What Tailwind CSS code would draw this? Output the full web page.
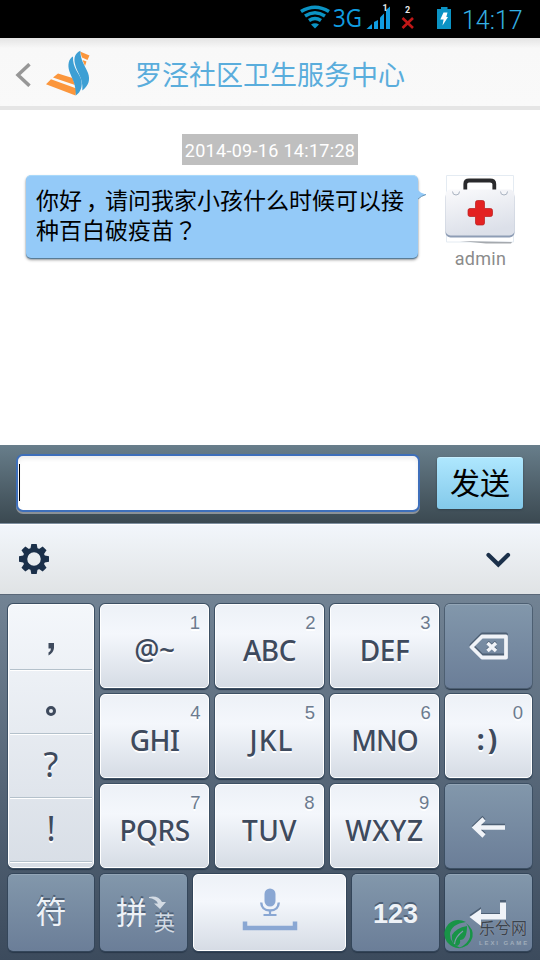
<!DOCTYPE html>
<html lang="zh-CN">
<head>
<meta charset="utf-8">
<title>罗泾社区卫生服务中心</title>
<script src="https://cdn.jsdelivr.net/npm/@tailwindcss/browser@4"></script>
</head>
<body class="w-[540px] h-[960px] overflow-hidden bg-white flex flex-col font-['Roboto','Noto_Sans_CJK_SC',sans-serif]">

<!-- status bar -->
<div class="h-[38px] shrink-0 bg-black flex items-start pl-[300px]">
  <svg class="w-[160px] h-[38px] shrink-0" viewBox="300 0 160 38">
    <g fill="none" stroke="#0b93c4" stroke-width="3.600">
      <path d="M301 11.500Q315 3 329 11.500"/>
      <path d="M305 16Q315 9.500 325 16"/>
      <path d="M309 20.500Q315 16.500 321 20.500"/>
    </g>
    <path d="M311 24.500Q315 21.800 319 24.500L315 28.500Z" fill="#0b93c4"/>
    <text x="333" y="27.300" font-size="26" textLength="29" lengthAdjust="spacingAndGlyphs" fill="#109de0" font-family="Open Sans" font-weight="400">3G</text>
    <g fill="#109de0">
      <path d="M366.500 29L372 24V29Z"/><path d="M374 29V22L378 20V29Z"/><path d="M380 29V17.500L384 13.500V29Z"/><path d="M386 29V10L390 6.500V29Z"/>
    </g>
    <text x="382.500" y="11.300" font-size="9" font-weight="700" fill="#e8e8e8" font-family="Roboto">1</text>
    <text x="405" y="13" font-size="9" font-weight="700" fill="#e8e8e8" font-family="Roboto">2</text>
    <path d="M402.500 18L413 28M413 18L402.500 28" stroke="#c01717" stroke-width="2.600"/>
    <path d="M437 9H441V7H447.500V9H451V29H437Z" fill="#0b93c4"/>
    <path d="M443.500 12.500H447.500L446.300 17H448L442.500 25.500L443.600 19.500H440.300Z" fill="#fff"/>
  </svg>
  <span class="ml-[2px] mt-[6px] text-[25px] leading-[29px] font-light text-[#35b0e3]">14:17</span>
</div>

<!-- header -->
<header class="h-[72px] shrink-0 flex items-center bg-linear-to-b from-[#e4e4e4] via-[#f8f8f8] via-15% to-[#f9f9f9] border-b-4 border-[#e5e5e5] pl-[15px]">
  <svg class="w-[16px] h-[24px] mt-[6px]" viewBox="0 0 16 24" fill="none" stroke="#979797" stroke-width="3.500"><path d="M14.500 1.200L3 12L14.500 22.800"/></svg>
  <svg class="w-[46px] h-[48px] ml-[14px] mt-[3px]" viewBox="45 50 46 48">
    <g fill="#fb963c">
      <path d="M58 73.500L72.500 78L75 85L53 77.500Z"/>
      <path d="M51 79.200L76.500 88.500L75.500 95.500L46 84.200Z"/>
      <path d="M80 51.500L89.500 55.500L87.500 60L82 57.500Z"/><path d="M82.500 60L86.500 61.500L85 66Z"/>
    </g>
    <g fill="#3d9fd4">
      <path d="M73 56.500C68.500 59 67.500 65 69.300 71C71.500 78 76 83 75.800 95.500C81 92 83 86 81 79C79 73 72.500 68 73 56.500Z"/>
      <path d="M80.300 50.700C75 53 73.500 58 75 64C77 73 83.500 78 82.300 90.500C88.500 86 90.500 80 88 73C85 65 80.500 61 80.300 50.700Z"/>
    </g>
  </svg>
  <h1 class="ml-[44px] mt-[7px] text-[27px] leading-[36px] text-[#5aaddc] whitespace-nowrap">罗泾社区卫生服务中心</h1>
</header>

<!-- conversation -->
<main class="h-[335px] shrink-0 flex flex-col pt-[24px]">
  <time class="self-center w-[176px] h-[31px] bg-[#bfbfbf] text-white text-[18px] leading-[33px] text-center tracking-[0.3px] whitespace-nowrap">2014-09-16 14:17:28</time>
  <div class="flex pl-[26px] pt-[10px]">
    <div class="relative w-[392px] h-[83px] rounded-[5px] bg-[#94caf8] border-t border-[#a9d9fa] shadow-[0_1px_1px_#527895,0_2px_3px_#999] pl-[10px] pt-[11px] text-[23px] leading-[30px] text-black whitespace-nowrap">
      <p class="h-[30px]">你好<span class="relative left-[4px]">，</span>请问我家小孩什么时候可以接</p>
      <p class="h-[30px]">种百白破疫苗<span lang="zh-TW" class="font-['Noto_Sans_CJK_TC'] leading-[16px]">？</span></p>
      <svg class="absolute left-[391px] top-[12px] w-[10px] h-[14px]" viewBox="0 0 10 14"><path d="M0 1Q3 5 9 6.500Q4 8 0 12Z" fill="#94caf8"/><path d="M9 6.500Q4 8 1 11" stroke="#6a97b8" fill="none"/></svg>
    </div>
    <div class="ml-[26px] w-[72px] flex flex-col items-center">
      <svg class="w-[72px] h-[70px]" viewBox="444 175 72 70">
        <defs><linearGradient id="case" x1="0" y1="0" x2=".3" y2="1"><stop offset="0" stop-color="#fafafc"/><stop offset="1" stop-color="#dce0e9"/></linearGradient></defs>
        <path d="M446.500 175.500H513.500V242H446.500Z" fill="#fff" stroke="#e4ebf2"/>
        <path d="M460 241L512 242L511 243.500H486Z" fill="#a5a9ae"/>
        <path d="M465.300 190V184Q465.300 180.500 469 180.500H490Q494.300 180.500 494.300 184V190" fill="none" stroke="#2a2a2c" stroke-width="3.800"/>
        <rect x="445.500" y="192" width="69" height="45.500" rx="5" fill="#8e9db5"/>
        <rect x="445.500" y="189.500" width="69" height="46" rx="5" fill="url(#case)"/>
        <g fill="#f5f6f9" stroke="#a9b2c0" stroke-width="1"><path d="M452.500 191.500A3.500 3.500 0 0 0 459.500 191.500"/><path d="M500.500 191.500A3.500 3.500 0 0 0 507.500 191.500"/></g>
        <path d="M477.500 200.500H482.500Q484.500 200.500 484.500 202.500V208.500H490.500Q492.500 208.500 492.500 210.500V214.500Q492.500 216.500 490.500 216.500H484.500V223Q484.500 225 482.500 225H477.500Q475.500 225 475.500 223V216.500H470Q468 216.500 468 214.500V210.500Q468 208.500 470 208.500H475.500V202.500Q475.500 200.500 477.500 200.500Z" fill="#e32222" stroke="#b91a1a" stroke-width=".7"/>
      </svg>
      <span class="mt-[3px] ml-px text-[18px] leading-[22px] tracking-[0.3px] text-[#8b8b8b]">admin</span>
    </div>
  </div>
</main>

<!-- message input -->
<div class="h-[79px] shrink-0 flex items-start bg-linear-to-b from-[#687e8b] to-[#3b4951] border-b border-[#7f90a1] pl-[16px] pt-[9px]">
  <div class="w-[404px] h-[58px] rounded-[7px] border-2 border-[#3e6fba] bg-white shadow-[0_2px_0_#8b9197,inset_0_3px_4px_#eee] pl-[1px] pt-[8px]"><div class="w-px h-[37px] bg-black"></div></div>
  <button class="ml-[17px] mt-[3px] w-[86px] h-[52px] rounded-[3px] bg-linear-to-b from-[#aee7fe] to-[#83c9ea] border-t border-[#c7efff] shadow-[0_1px_2px_#33404a] text-[30px] leading-[50px] pt-px text-black whitespace-nowrap">发送</button>
</div>

<!-- keyboard toolbar -->
<div class="h-[71px] shrink-0 flex items-center justify-between bg-linear-to-b from-[#f2f6fb] to-[#e0e3e5] border-t border-white border-b border-b-[#5a6878] pl-[18px] pr-[29px]">
  <svg class="w-[32px] h-[32px] -mt-[2px]" viewBox="-16 -16 32 32" fill="#1b304a">
    <g id="teeth"><path d="M-2.700 -15H2.700L4 -8H-4Z"/><path d="M-2.700 15H2.700L4 8H-4Z"/><path d="M-15 -2.700V2.700L-8 4V-4Z"/><path d="M15 -2.700V2.700L8 4V-4Z"/></g>
    <use href="#teeth" transform="rotate(45)"/>
    <circle r="9" fill="none" stroke="#1b304a" stroke-width="4.500"/>
  </svg>
  <svg class="w-[26px] h-[18px] mt-[1px]" viewBox="0 0 26 18" fill="none" stroke="#1b304a" stroke-width="4.200" stroke-linecap="round"><path d="M3.500 4L13.300 13.500L23 4"/></svg>
</div>

<!-- keyboard -->
<section class="h-[365px] shrink-0 bg-linear-to-b from-[#728394] to-[#3c4b5d] pl-[8px] pt-[9px] flex flex-col gap-[6px] font-['Noto_Sans','Noto_Sans_CJK_SC',sans-serif]">
  <div class="grid grid-cols-[86px_109px_109px_109px_87px] grid-rows-[84px_84px_84px] gap-[6px] text-[28px] font-medium text-[#3e4a5d] text-center">
    <div class="row-span-3 rounded-[5px] bg-linear-to-b from-[#f4f7fb] to-[#d8dee6] border border-white shadow-[0_0_0_1px_#3d5064,0_2px_1px_#29384a] flex flex-col px-px font-normal text-[34px]">
      <div class="h-[65px] border-b border-[#b4c1cb] shadow-[0_1px_0_#fff] flex justify-center"><svg class="mt-[38px] w-[8px] h-[13px]" viewBox="0 0 8 13"><path d="M1.500 0H7V5Q6.500 10 1.500 12.500V9.500Q4 8 4 5.500H1.500Z" fill="#3e4a5d"/></svg></div>
      <div class="h-[64px] border-b border-[#b4c1cb] shadow-[0_1px_0_#fff] flex justify-center"><div class="mt-[36px] w-[10px] h-[10px] rounded-full border-3 border-[#3e4a5d]"></div></div>
      <div class="h-[64px] border-b border-[#b4c1cb] shadow-[0_1px_0_#fff] leading-[60px] [text-shadow:0_2px_0_#fff]">?</div>
      <div class="h-[64px] border-b border-[#b4c1cb] shadow-[0_1px_0_#fff] leading-[60px] [text-shadow:0_2px_0_#fff]">!</div>
    </div>
    <div class="relative rounded-[5px] bg-linear-to-b from-[#edf1f7] via-[#f4f7fc] via-35% to-[#d6dce5] border border-white shadow-[0_0_0_1px_#3d5064,0_2px_1px_#29384a] leading-[88px] [text-shadow:0_2px_0_#fff]"><span class="text-[28px] tracking-[-0.3px]">@~</span><span class="absolute right-[8px] top-[7px] font-['Liberation_Sans'] text-[18.5px] leading-[22px] font-normal text-[#6c7b8f]">1</span></div>
    <div class="relative rounded-[5px] bg-linear-to-b from-[#edf1f7] via-[#f4f7fc] via-35% to-[#d6dce5] border border-white shadow-[0_0_0_1px_#3d5064,0_2px_1px_#29384a] leading-[90px] tracking-[-0.5px] [text-shadow:0_2px_0_#fff]">ABC<span class="absolute right-[8px] top-[7px] font-['Liberation_Sans'] text-[18.5px] leading-[22px] font-normal text-[#6c7b8f]">2</span></div>
    <div class="relative rounded-[5px] bg-linear-to-b from-[#edf1f7] via-[#f4f7fc] via-35% to-[#d6dce5] border border-white shadow-[0_0_0_1px_#3d5064,0_2px_1px_#29384a] leading-[90px] tracking-[-0.5px] [text-shadow:0_2px_0_#fff]">DEF<span class="absolute right-[8px] top-[7px] font-['Liberation_Sans'] text-[18.5px] leading-[22px] font-normal text-[#6c7b8f]">3</span></div>
    <div class="rounded-[5px] bg-linear-to-b from-[#8297ab] to-[#6b7e98] border-t border-[#94a6b7] shadow-[0_0_0_1px_#4d5f72,0_2px_1px_#29384a] flex items-center justify-center">
      <svg class="w-[40px] h-[30px]" viewBox="0 0 40 30" fill="none"><path d="M2.500 13L13 2.500H37V23.500H13Z" stroke="#4e6075" stroke-width="3.800" stroke-linejoin="round"/><path d="M2.500 15L13 4.500H37V25.500H13Z" stroke="#f0f3f8" stroke-width="3.800" stroke-linejoin="round"/><path d="M18.500 10L27 18M27 10L18.500 18" stroke="#4e6075" stroke-width="3.500"/><path d="M18.500 11L27 19M27 11L18.500 19" stroke="#f0f3f8" stroke-width="3.500"/></svg>
    </div>

    <div class="relative rounded-[5px] bg-linear-to-b from-[#edf1f7] via-[#f4f7fc] via-35% to-[#d6dce5] border border-white shadow-[0_0_0_1px_#3d5064,0_2px_1px_#29384a] leading-[90px] tracking-[-0.5px] [text-shadow:0_2px_0_#fff]">GHI<span class="absolute right-[8px] top-[7px] font-['Liberation_Sans'] text-[18.5px] leading-[22px] font-normal text-[#6c7b8f]">4</span></div>
    <div class="relative rounded-[5px] bg-linear-to-b from-[#edf1f7] via-[#f4f7fc] via-35% to-[#d6dce5] border border-white shadow-[0_0_0_1px_#3d5064,0_2px_1px_#29384a] leading-[90px] [text-shadow:0_2px_0_#fff]"><span class="pl-[4px] tracking-[1px]">JKL</span><span class="absolute right-[8px] top-[7px] font-['Liberation_Sans'] text-[18.5px] leading-[22px] font-normal text-[#6c7b8f]">5</span></div>
    <div class="relative rounded-[5px] bg-linear-to-b from-[#edf1f7] via-[#f4f7fc] via-35% to-[#d6dce5] border border-white shadow-[0_0_0_1px_#3d5064,0_2px_1px_#29384a] leading-[90px] tracking-[-0.9px] [text-shadow:0_2px_0_#fff]">MNO<span class="absolute right-[8px] top-[7px] font-['Liberation_Sans'] text-[18.5px] leading-[22px] font-normal text-[#6c7b8f]">6</span></div>
    <div class="relative rounded-[5px] bg-linear-to-b from-[#edf1f7] via-[#f4f7fc] via-35% to-[#d6dce5] border border-white shadow-[0_0_0_1px_#3d5064,0_2px_1px_#29384a] leading-[88px] [text-shadow:0_2px_0_#fff]"><span class="font-bold text-[28px] tracking-[3px]">:)</span><span class="absolute right-[8px] top-[7px] font-['Liberation_Sans'] text-[18.5px] leading-[22px] font-normal text-[#6c7b8f]">0</span></div>

    <div class="relative rounded-[5px] bg-linear-to-b from-[#edf1f7] via-[#f4f7fc] via-35% to-[#d6dce5] border border-white shadow-[0_0_0_1px_#3d5064,0_2px_1px_#29384a] leading-[90px] tracking-[-0.5px] [text-shadow:0_2px_0_#fff]">PQRS<span class="absolute right-[8px] top-[7px] font-['Liberation_Sans'] text-[18.5px] leading-[22px] font-normal text-[#6c7b8f]">7</span></div>
    <div class="relative rounded-[5px] bg-linear-to-b from-[#edf1f7] via-[#f4f7fc] via-35% to-[#d6dce5] border border-white shadow-[0_0_0_1px_#3d5064,0_2px_1px_#29384a] leading-[90px] tracking-[0.5px] [text-shadow:0_2px_0_#fff]">TUV<span class="absolute right-[8px] top-[7px] font-['Liberation_Sans'] text-[18.5px] leading-[22px] font-normal text-[#6c7b8f]">8</span></div>
    <div class="relative rounded-[5px] bg-linear-to-b from-[#edf1f7] via-[#f4f7fc] via-35% to-[#d6dce5] border border-white shadow-[0_0_0_1px_#3d5064,0_2px_1px_#29384a] leading-[90px] tracking-[0.7px] [text-shadow:0_2px_0_#fff]">WXYZ<span class="absolute right-[8px] top-[7px] font-['Liberation_Sans'] text-[18.5px] leading-[22px] font-normal text-[#6c7b8f]">9</span></div>
    <div class="rounded-[5px] bg-linear-to-b from-[#8297ab] to-[#6b7e98] border-t border-[#94a6b7] shadow-[0_0_0_1px_#3d5064,0_2px_1px_#29384a] flex items-center justify-center">
      <svg class="w-[36px] h-[24px]" viewBox="0 0 36 24" fill="none" stroke-width="4.500"><path d="M34 11H5M13 2.500L4 11L13 19.500" stroke="#4e6075"/><path d="M34 12.500H5M13 4L4 12.500L13 21" stroke="#f0f3f8"/></svg>
    </div>
  </div>

  <div class="flex gap-[6px] h-[77px]">
    <div class="w-[86px] rounded-[5px] bg-linear-to-b from-[#8297ab] to-[#6b7e98] border-t border-[#94a6b7] shadow-[0_0_0_1px_#34465a,0_2px_1px_#29384a] text-center text-[31px] leading-[73px] text-[#eef2f7] [text-shadow:0_-2px_0_#4e6075]">符</div>
    <div class="relative w-[87px] rounded-[5px] bg-linear-to-b from-[#8297ab] to-[#6b7e98] border-t border-[#94a6b7] shadow-[0_0_0_1px_#34465a,0_2px_1px_#29384a] text-[31px] leading-[74px] pl-[16px] text-[#eef2f7] [text-shadow:0_-2px_0_#4e6075]">拼<span class="absolute left-[54px] top-[35px] text-[21px] leading-[24px] text-[#d3dbe4]">英</span>
      <svg class="absolute left-[49px] top-[21px] w-[18px] h-[14px]" viewBox="0 0 18 14"><path d="M0 1Q9 -1 13 6H17L11 13L5 7.500H9Q6.500 2.500 0 2Z" fill="#d3dbe4"/></svg></div>
    <div class="w-[153px] rounded-[5px] bg-linear-to-b from-[#edf1f7] via-[#f4f7fc] via-35% to-[#d6dce5] border border-white shadow-[0_0_0_1px_#34465a,0_2px_1px_#29384a] flex justify-center">
      <svg class="mt-[13px] ml-[1px] w-[56px] h-[44px]" viewBox="0 0 56 44" fill="none" stroke="#8aa7d3"><rect x="22.500" y="0.500" width="11" height="18" rx="5.500" fill="#8aa7d3" stroke="none"/><path d="M19.200 14.500Q19.700 22.500 28 22.500Q36.300 22.500 36.800 14.500" stroke-width="2.400"/><path d="M28 22V27M21.500 27H34.500" stroke-width="2.200"/><path d="M3 33.500V40H53V33.500" stroke-width="4.500"/></svg>
    </div>
    <div class="w-[87px] rounded-[5px] bg-linear-to-b from-[#8297ab] to-[#6b7e98] border-t border-[#94a6b7] shadow-[0_0_0_1px_#34465a,0_2px_1px_#29384a] text-center font-['Liberation_Sans'] font-bold text-[27px] leading-[78px] text-[#eef2f7] [text-shadow:0_-2px_0_#4e6075]">123</div>
    <div class="relative w-[87px] rounded-[5px] bg-linear-to-b from-[#8297ab] to-[#6b7e98] border-t border-[#94a6b7] shadow-[0_0_0_1px_#34465a,0_2px_1px_#29384a]">
      <svg class="absolute left-[24px] top-[24px] w-[40px] h-[28px]" viewBox="469 899 40 28"><path d="M500 900H506V918H481V924L469.500 915L481 907V913H500Z" fill="#4e6075"/><path d="M500 902.500H506V919.500H481V926L469.500 917L481 909V914H500Z" fill="#f0f3f8"/></svg>
      <!-- site watermark -->
      <div class="absolute left-[-2px] top-[44px] flex">
        <svg class="w-[32px] h-[31px]" viewBox="443 918 32 31" fill="#189447"><path d="M466 921Q456 916 448.500 923Q441 932 447 941Q453 948 461 947Q450 943 450 933Q451 923 466 921Z"/><path d="M466 922Q474 928 472.500 936Q470 946 459 947Q468 943 470 936Q471 928 466 922Z"/><path d="M467 925Q456 927 452 934Q451 942 457 945Q461 943 460 939Q467 939 467 925Z"/><path d="M454.500 943Q455 936 463 930" stroke="#8299ad" fill="none" stroke-width="1.200"/></svg>
        <div class="ml-[4px] flex flex-col whitespace-nowrap">
          <span class="text-[16px] leading-[18px] text-[#3b434c] [text-shadow:0_0_1px_#aab4bf]">乐兮网</span>
          <span class="mt-[2px] font-['Liberation_Sans'] text-[6px] leading-[8px] font-bold tracking-[1.900px] text-[#a0adba]">LEXI GAME</span>
        </div>
      </div>
    </div>
  </div>
</section>
</body>
</html>
